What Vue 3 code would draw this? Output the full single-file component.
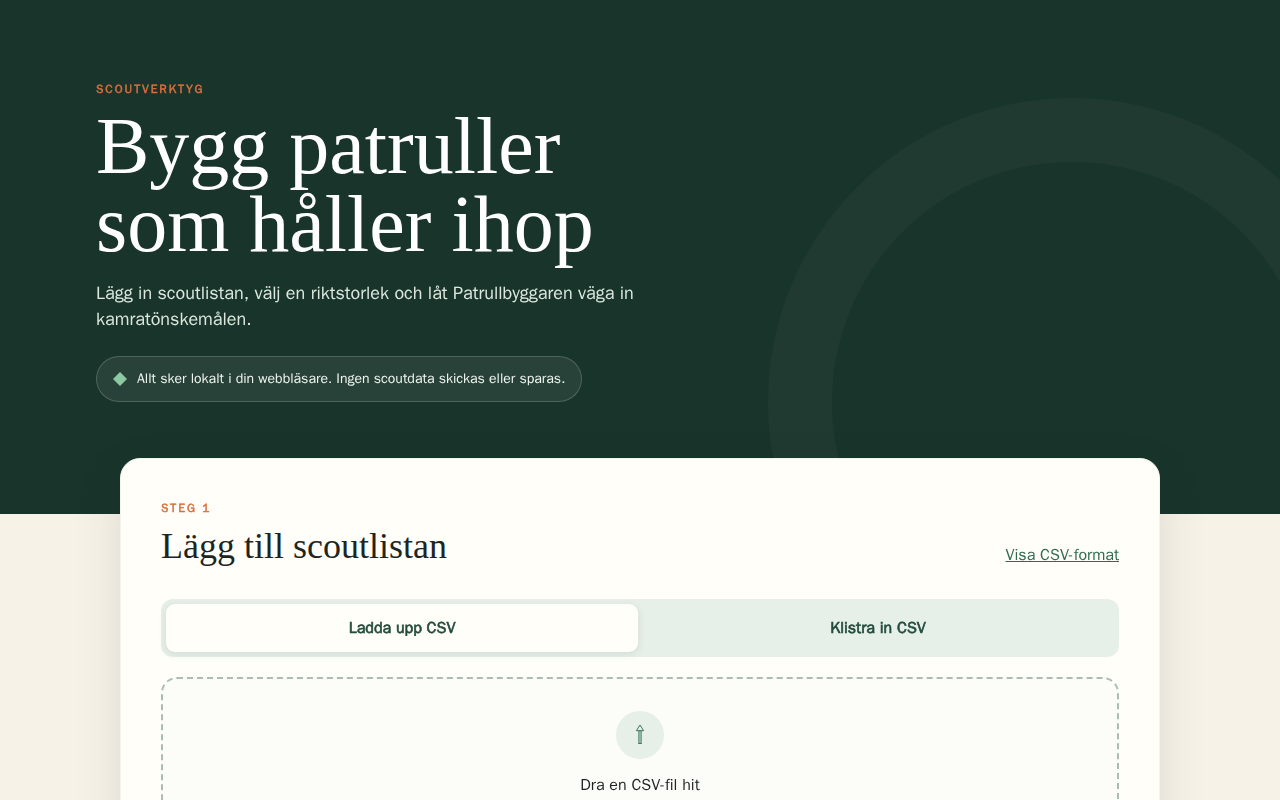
<script setup>
import { ref } from 'vue'

const mode = ref('upload')
const tabs = [
  { id: 'upload', label: 'Ladda upp CSV' },
  { id: 'paste', label: 'Klistra in CSV' }
]
</script>

<template>
  <div class="page">
    <header class="hero">
      <div class="ring" aria-hidden="true"></div>
      <div class="intro">
        <p class="eyebrow">Scoutverktyg</p>
        <h1>Bygg patruller<br />som håller ihop</h1>
        <p class="lead">
          Lägg in scoutlistan, välj en riktstorlek och låt Patrullbyggaren väga in kamratönskemålen.
        </p>
        <p class="privacy">
          <svg class="diamond" viewBox="0 0 14 14" aria-hidden="true"><path d="M7 0 14 7 7 14 0 7z" /></svg>
          <span>Allt sker lokalt i din webbläsare. Ingen scoutdata skickas eller sparas.</span>
        </p>
      </div>
    </header>

    <main class="card">
      <div class="card-head">
        <div>
          <p class="eyebrow">Steg 1</p>
          <h2>Lägg till scoutlistan</h2>
        </div>
        <a class="format" href="#format">Visa CSV-format</a>
      </div>

      <div class="tabs" role="tablist">
        <button
          v-for="tab in tabs"
          :key="tab.id"
          type="button"
          role="tab"
          :aria-selected="mode === tab.id"
          :class="['tab', { active: mode === tab.id }]"
          @click="mode = tab.id"
        >{{ tab.label }}</button>
      </div>

      <label class="drop">
        <input class="file" type="file" accept=".csv" />
        <span class="badge" aria-hidden="true">
          <svg viewBox="0 0 10 22">
            <path class="stem" d="M3.5 7h3v12.5h-3z" />
            <path d="M5 1 8.6 6.7H1.4zM3.4 19.5h3.2" />
          </svg>
        </span>
        <span>Dra en CSV-fil hit</span>
      </label>
    </main>
  </div>
</template>

<style>
body {
  margin: 0;
  background: #f7f2e8;
}
</style>

<style scoped>
.page {
  font-family: "WenQuanYi Zen Hei", "Libre Franklin", "Liberation Sans", sans-serif;
  font-size: 16px;
  line-height: 24px;
  color: #1e2521;
}

.hero {
  position: relative;
  overflow: hidden;
  padding: 80px 96px 112px;
  background: #19342b;
  color: #fff;
}

.ring {
  position: absolute;
  right: -96px;
  bottom: -192px;
  width: 480px;
  height: 480px;
  border: 64px solid rgba(255, 255, 255, 0.03);
  border-radius: 50%;
}

.intro {
  position: relative;
  max-width: 680px;
}

.eyebrow {
  margin: 0;
  font-size: 12px;
  font-weight: 700;
  line-height: 18px;
  letter-spacing: 0.16em;
  text-transform: uppercase;
  color: #d96f3d;
  -webkit-text-stroke: 0.04em currentColor;
}

h1,
h2 {
  font-family: "Liberation Serif", serif;
  font-weight: 400;
}

h1 {
  margin: 9px 0 17px;
  font-size: 80px;
  line-height: 78px;
}

.lead {
  max-width: 560px;
  margin: 0 0 24px;
  font-size: 18px;
  line-height: 26px;
  color: #dbe7df;
}

.privacy {
  display: inline-flex;
  align-items: center;
  gap: 10px;
  margin: 0;
  padding: 10px 16px;
  border: 1px solid rgba(255, 255, 255, 0.18);
  border-radius: 24px;
  background: rgba(255, 255, 255, 0.07);
  font-size: 14px;
  color: #eff6f1;
}

.diamond {
  width: 14px;
  height: 14px;
  fill: #8cc9a1;
}

.card {
  position: relative;
  box-sizing: border-box;
  width: calc(100% - 48px);
  max-width: 1040px;
  margin: -56px auto 48px;
  padding: 40px;
  border: 1px solid #f1f3ec;
  border-radius: 20px;
  background: #fffef9;
  box-shadow: 0 16px 48px rgba(26, 52, 43, 0.12);
}

.card-head {
  display: flex;
  align-items: flex-end;
  justify-content: space-between;
  gap: 24px;
  margin-bottom: 32px;
}

h2 {
  margin: 8px 0 0;
  font-size: 36px;
  line-height: 42px;
}

.format {
  color: #2f6b4f;
  text-underline-offset: 1px;
}

.tabs {
  display: grid;
  grid-template-columns: 1fr 1fr;
  gap: 4px;
  padding: 5px;
  border-radius: 12px;
  background: #e6f0e9;
}

.tab {
  padding: 12px;
  border: 0;
  border-radius: 9px;
  background: transparent;
  font: inherit;
  font-weight: 700;
  color: #234b3b;
  -webkit-text-stroke: 0.04em currentColor;
}

.tab.active {
  background: #fffef9;
  box-shadow: 0 2px 8px rgba(26, 52, 43, 0.1);
}

.drop {
  display: flex;
  flex-direction: column;
  align-items: center;
  gap: 14px;
  margin-top: 20px;
  padding: 32px;
  border: 2px dashed #a9bdb1;
  border-radius: 16px;
  background: #fcfcf8;
}

.file {
  position: absolute;
  width: 1px;
  height: 1px;
  opacity: 0;
}

.badge {
  display: grid;
  place-items: center;
  width: 48px;
  height: 48px;
  border-radius: 50%;
  background: #e6f0e9;
}

.badge svg {
  width: 10px;
  height: 22px;
  fill: none;
  stroke: #3f745c;
}

.badge .stem {
  fill: #8fb3a2;
  stroke: #7da491;
}
</style>
